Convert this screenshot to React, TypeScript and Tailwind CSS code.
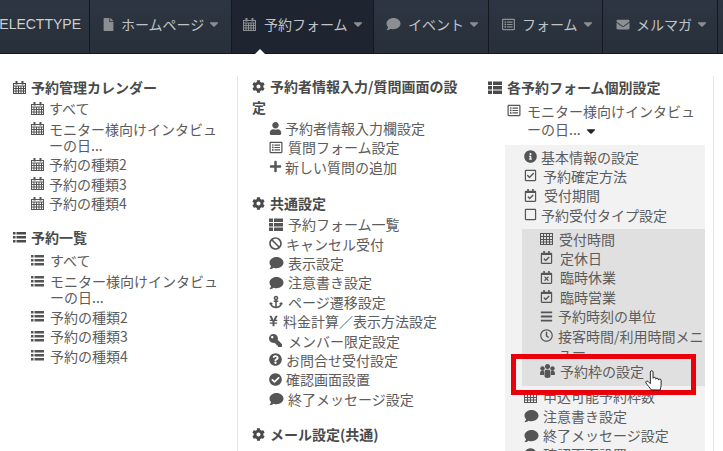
import React from 'react';
import {
  FaAnchor, FaBan, FaBars, FaCheckCircle, FaCog, FaComment, FaEnvelope, FaFile, FaInfoCircle,
  FaKey, FaPlus, FaQuestionCircle, FaRegCalendarCheck, FaRegCalendarTimes, FaRegCheckSquare, FaRegClock,
  FaRegListAlt, FaRegSquare, FaUser, FaYenSign, FaCaretDown,
} from 'react-icons/fa';

type Ic = React.ComponentType<{ className?: string }>;

function GridIcon({ className }: { className?: string }) {
  return (
    <svg className={className} viewBox="0 0 13 13" fill="none" stroke="currentColor" strokeWidth="1">
      <rect x="0.5" y="1.5" width="12" height="11" />
      <path d="M0.500 4.500h12M0.500 7.500h12M0.500 10h12M3.500 1.500v11M6.500 1.500v11M9.500 1.500v11" />
    </svg>
  );
}

function CalendarIcon({ className }: { className?: string }) {
  return (
    <svg className={className} viewBox="0 0 13 13" fill="none" stroke="currentColor" strokeWidth="1">
      <rect x="0.5" y="2.500" width="12" height="10" />
      <path d="M0.500 5h12M0.500 7.500h12M0.500 10h12M3 5v7.500M5.500 5v7.500M8 5v7.500M10.500 5v7.500" />
      <rect x="2.500" y="0" width="2" height="3.500" fill="currentColor" stroke="none" />
      <rect x="8.500" y="0" width="2" height="3.500" fill="currentColor" stroke="none" />
    </svg>
  );
}

function ListIcon({ className }: { className?: string }) {
  return (
    <svg className={className} viewBox="0 0 13 13" fill="currentColor">
      <rect x="0" y="1" width="2.500" height="2.500" />
      <rect x="3.500" y="1" width="9.500" height="2.500" />
      <rect x="0" y="5" width="2.500" height="2.500" />
      <rect x="3.500" y="5" width="9.500" height="2.500" />
      <rect x="0" y="9" width="2.500" height="2.500" />
      <rect x="3.500" y="9" width="9.500" height="2.500" />
    </svg>
  );
}

function ThListIcon({ className }: { className?: string }) {
  return (
    <svg className={className} viewBox="0 0 14 13" fill="currentColor">
      <rect x="0" y="0.500" width="4" height="3.500" />
      <rect x="5" y="0.500" width="9" height="3.500" />
      <rect x="0" y="5" width="4" height="3.500" />
      <rect x="5" y="5" width="9" height="3.500" />
      <rect x="0" y="9.500" width="4" height="3.500" />
      <rect x="5" y="9.500" width="9" height="3.500" />
    </svg>
  );
}

// three heads over one body, reads like a paw at this size
function GroupIcon({ className }: { className?: string }) {
  return (
    <svg className={className} viewBox="0 0 15 14" fill="currentColor">
      <circle cx="7.500" cy="2.500" r="2.500" />
      <circle cx="2.500" cy="4.500" r="2.200" />
      <circle cx="12.500" cy="4.500" r="2.200" />
      <path d="M0 10c0-2.500 1-3.500 2.500-3.500S4 7 4 8.500V11H1c-.6 0-1-.4-1-1zM15 10c0-2.500-1-3.500-2.500-3.500S11 7 11 8.500V11h3c.6 0 1-.4 1-1z" />
      <path d="M4.500 8c0-1.800 1.300-2.500 3-2.500s3 .7 3 2.500v4c0 1-.8 2-3 2s-3-1-3-2z" />
    </svg>
  );
}

const NAV: { label: string; icon: Ic; box: string; iconClass: string; active?: boolean }[] = [
  { label: 'ホームページ', icon: FaFile, box: 'w-[142px] pl-[13px]', iconClass: 'w-[11px] h-[13px] mr-[7px]' },
  { label: '予約フォーム', icon: CalendarIcon, box: 'w-[142px] pl-[11px]', iconClass: 'w-[13px] h-[13px] mr-[8px]', active: true },
  { label: 'イベント', icon: FaComment, box: 'w-[115px] pl-[12px]', iconClass: 'w-[15px] h-[14px] mr-[7px]' },
  { label: 'フォーム', icon: FaRegListAlt, box: 'w-[114px] pl-[13px]', iconClass: 'w-[13px] h-[13px] mr-[7px]' },
  { label: 'メルマガ', icon: FaEnvelope, box: 'w-[115px] pl-[13px]', iconClass: 'w-[14px] h-[13px] mr-[6px]' },
];

function Row({ icon: Icon, children, pad = 'pl-[19px]', leading = 'leading-[16px]', size = 'w-[13px] h-[13px]', className = '' }: {
  icon: Ic; children: React.ReactNode; pad?: string; leading?: string; size?: string; className?: string;
}) {
  return (
    <div className={`relative pb-[3.4px] ${leading} ${pad} ${className}`}>
      <Icon className={`absolute left-0 top-[1.5px] text-[#555] ${size}`} />
      {children}
    </div>
  );
}

function Heading({ icon: Icon, children, size = 'w-[13px]', leading = 'leading-[22px]' }: {
  icon: Ic; children: React.ReactNode; size?: string; leading?: string;
}) {
  return (
    <div className={`font-bold text-[#4a4a4a] ${leading}`}>
      <Icon className={`inline-block h-[13px] mr-[5px] align-[-1px] text-[#4a4a4a] ${size}`} />
      {children}
    </div>
  );
}

const TYPES = ['すべて', 'モニター様向けインタビューの日...', '予約の種類2', '予約の種類3', '予約の種類4'];

const COMMENT = 'w-[15px] h-[14px]';

export default function App() {
  return (
    <div className="relative w-[723px] h-[451px] overflow-hidden bg-white text-[14px] text-[#5c5c5c]" style={{ fontFamily: '"Noto Sans CJK JP", "Liberation Sans", sans-serif' }}>
      <nav className="flex h-[54px] pb-0 bg-gradient-to-b from-[#2d3642] to-[#272f3a] border-b border-[#15191f] text-[#c0c4c8]">
        <div className="w-[90px] shrink-0 overflow-hidden border-r border-[#15191f] flex items-center justify-end pr-[8px] pb-[5px] text-[14px] text-[#ccd0d3] whitespace-nowrap" style={{ fontFamily: '"Liberation Sans", sans-serif' }}>
          ELECTTYPE
        </div>
        {NAV.map((n) => (
          <div key={n.label} className={`${n.box} shrink-0 flex items-center pb-[5px] border-r border-[#15191f] relative ${n.active ? 'bg-[#1e2530]' : ''}`}>
            <n.icon className={`text-[#8c8f92] ${n.iconClass}`} />
            <span className="whitespace-nowrap">{n.label}</span>
            <FaCaretDown className="w-[14px] h-[14px] ml-[3px] text-[#8c8f92]" />
            {n.active && <div className="absolute left-[23px] -bottom-[1px] w-0 h-0 border-x-[5px] border-x-transparent border-b-[5px] border-b-white" />}
          </div>
        ))}
      </nav>

      <div className="flex pt-[22px] pl-[13px]">
        <div className="w-[224px] shrink-0 pr-[10px] h-[400px]">
          <Heading icon={CalendarIcon}>予約管理カレンダー</Heading>
          <div className="pl-[18px] mt-[2px]">
            {TYPES.map((t, i) => (
              <Row key={t} icon={CalendarIcon} pad="pl-[18px]" className={i === 1 ? 'mt-[1.5px]' : ''}>{t}</Row>
            ))}
          </div>
          <div className="mt-[12px]">
            <Heading icon={ListIcon}>予約一覧</Heading>
            <div className="pl-[18px] mt-[4px]">
              {TYPES.map((t, i) => (
                <Row key={t} icon={ListIcon} pad="pl-[19px]" className={i === 1 ? 'mt-[1.5px]' : ''}>{t}</Row>
              ))}
            </div>
          </div>
        </div>

        <div className="w-[246px] shrink-0 border-l border-[#e6e6e6] pl-[14px] pr-[18px] h-[400px]">
          <Heading icon={FaCog} leading="leading-[21px]">予約者情報入力/質問画面の設定</Heading>
          <div className="pl-[17px] mt-[2px]">
            <Row icon={FaUser} pad="pl-[16px]">予約者情報入力欄設定</Row>
            <Row icon={FaRegListAlt} pad="pl-[19px]" size="w-[14px] h-[13px]">質問フォーム設定</Row>
            <Row icon={FaPlus} pad="pl-[16px]">新しい質問の追加</Row>
          </div>
          <div className="mt-[14px]">
            <Heading icon={FaCog}>共通設定</Heading>
            <div className="pl-[17px] mt-[2px]">
              <Row icon={ThListIcon} size="w-[14px] h-[13px]">予約フォーム一覧</Row>
              <Row icon={FaBan} pad="pl-[17px]">キャンセル受付</Row>
              <Row icon={FaComment} size={COMMENT}>表示設定</Row>
              <Row icon={FaComment} size={COMMENT}>注意書き設定</Row>
              <Row icon={FaAnchor} size="w-[14px] h-[14px]">ページ遷移設定</Row>
              <Row icon={FaYenSign} pad="pl-[14px]" size="w-[9px] h-[12px]">料金計算／表示方法設定</Row>
              <Row icon={({ className }) => <FaKey className={`${className} -scale-x-100`} />}>メンバー限定設定</Row>
              <Row icon={FaQuestionCircle} pad="pl-[17px]">お問合せ受付設定</Row>
              <Row icon={FaCheckCircle} pad="pl-[17px]">確認画面設置</Row>
              <Row icon={FaComment} size={COMMENT}>終了メッセージ設定</Row>
            </div>
          </div>
          <div className="mt-[13px]">
            <Heading icon={FaCog}>メール設定(共通)</Heading>
          </div>
        </div>

        <div className="w-[231px] shrink-0 border-r border-[#e6e6e6] pl-[5px] pr-[8px] h-[400px]">
          <Heading icon={ThListIcon} size="w-[14px]">各予約フォーム個別設定</Heading>
          <div className="pl-[19px] mt-[4px]">
            <Row icon={FaRegListAlt} pad="pl-[20px]" leading="leading-[18px]" size="w-[14px] h-[13px]" className="pb-0">
              モニター様向けインタビューの日...
              <FaCaretDown className="inline-block w-[14px] h-[14px] ml-[3px] text-[#222]" />
            </Row>
          </div>
          <div className="mt-[3px] ml-[17px] bg-[#f2f2f2] pt-[4px] h-[320px]">
            <div className="pl-[19px]">
              <Row icon={FaInfoCircle} pad="pl-[17px]">基本情報の設定</Row>
              <Row icon={FaRegCheckSquare}>予約確定方法</Row>
              <Row icon={FaRegCalendarCheck} pad="pl-[20px]">受付期間</Row>
              <Row icon={FaRegSquare} pad="pl-[17px]">予約受付タイプ設定</Row>
            </div>
            <div className="mt-[2.4px] ml-[17px] bg-[#e0e0e0] pl-[18px] pt-[2px] pb-[4px]">
              <Row icon={GridIcon}>受付時間</Row>
              <Row icon={FaRegCalendarCheck} pad="pl-[20px]">定休日</Row>
              <Row icon={FaRegCalendarTimes} pad="pl-[20px]">臨時休業</Row>
              <Row icon={FaRegCalendarCheck} pad="pl-[20px]">臨時営業</Row>
              <Row icon={FaBars} pad="pl-[18px]">予約時刻の単位</Row>
              <Row icon={FaRegClock} pad="pl-[18px]">接客時間/利用時間メニュー</Row>
              <Row icon={GroupIcon} pad="pl-[20px]" size="w-[15px] h-[14px]">予約枠の設定</Row>
            </div>
            <div className="pl-[19px] pt-[2px]">
              <Row icon={GridIcon}>申込可能予約枠数</Row>
              <Row icon={FaComment} size={COMMENT}>注意書き設定</Row>
              <Row icon={FaComment} size={COMMENT}>終了メッセージ設定</Row>
              <Row icon={FaCheckCircle}>確認画面設置</Row>
            </div>
          </div>
        </div>
      </div>

      <div className="absolute left-[511px] top-[354px] w-[185px] h-[41px] border-[5px] border-[#e8000b]" />
      <svg className="absolute left-[645px] top-[370px] w-[17px] h-[22px]" viewBox="0 0 19 24">
        <path d="M6 2c0-2 3-2 3 0v7c0-1.500 3-1.500 3 0v1c0-1.500 3-1.500 3 0v1c0-1.500 3-1.500 3 0v6c0 2-1 3-1 5H7c-1-2-5-6-6-8-.6-1.500 1-2.500 2.500-1.500L6 15z" fill="#fff" stroke="#111" strokeWidth="1" />
      </svg>
    </div>
  );
}
